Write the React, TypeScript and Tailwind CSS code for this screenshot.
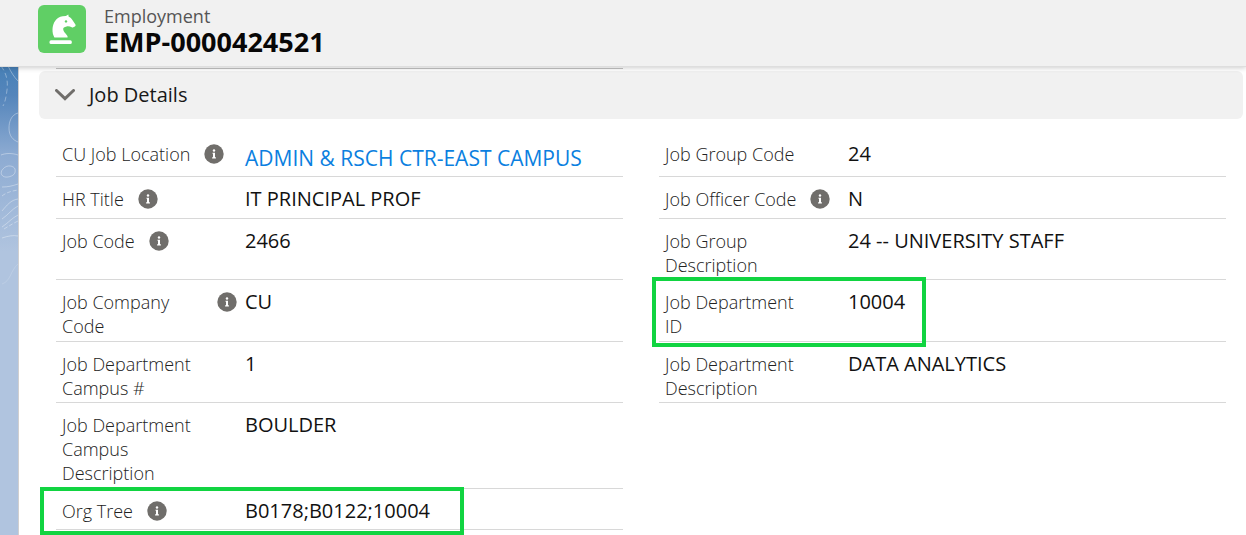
import { useState } from "react";
import type { ReactNode } from "react";

type FieldData = {
  label: string;
  value: string;
  info?: boolean;
  link?: boolean;
  highlight?: string;
};

type RowData = { left: FieldData; right?: FieldData; size: string };

const rows: RowData[] = [
  {
    left: { label: "CU Job Location", value: "ADMIN & RSCH CTR-EAST CAMPUS", info: true, link: true },
    right: { label: "Job Group Code", value: "24" },
    size: "min-h-[45px] pb-0.5",
  },
  {
    left: { label: "HR Title", value: "IT PRINCIPAL PROF", info: true },
    right: { label: "Job Officer Code", value: "N", info: true },
    size: "min-h-[42px] pb-0.5",
  },
  {
    left: { label: "Job Code", value: "2466", info: true },
    right: { label: "Job Group Description", value: "24 -- UNIVERSITY STAFF" },
    size: "pb-0.5",
  },
  {
    left: { label: "Job Company Code", value: "CU", info: true },
    right: {
      label: "Job Department ID",
      value: "10004",
      highlight: "-left-[7px] -top-[3px] -bottom-1.5 w-[274px]",
    },
    size: "pb-[3px]",
  },
  {
    left: { label: "Job Department Campus #", value: "1" },
    right: { label: "Job Department Description", value: "DATA ANALYTICS" },
    size: "pb-0.5",
  },
  {
    left: { label: "Job Department Campus Description", value: "BOULDER" },
    size: "pb-[3px]",
  },
  {
    left: {
      label: "Org Tree",
      value: "B0178;B0122;10004",
      info: true,
      highlight: "-left-4 -top-0.5 -bottom-1.5 w-[424px]",
    },
    size: "min-h-[41px] pb-0.5",
  },
];

function KnightIcon() {
  return (
    <svg viewBox="0 0 48 48" className="size-12 shrink-0 rounded-md bg-[#60cf65]" aria-hidden="true">
      <path
        fill="#fff"
        d="M30.300 9.600L30.700 11.800C32.300 12.400 33.600 13.600 34.400 15L37.400 19.600C37.900 20.400 37.600 21 36.900 21.400L35.300 22.300C34.700 22.600 34.200 22.500 33.700 22.200C32.200 21.400 30.400 21.100 28.600 21.400C26.200 21.800 25.100 22.800 25.200 24.300C25.300 26.500 27.200 28.100 28.700 29.900C29.600 30.900 29.900 31.700 29.500 32.600H16.400C15 30 14.400 27.600 14.500 24.300C14.800 17.600 18.300 12.300 24.600 11.200L27.900 11Z"
      />
      <circle cx="28" cy="16.400" r="1.200" fill="#60cf65" />
      <rect x="11.500" y="35.200" width="22.300" height="3.700" rx="1.500" fill="#fff" />
    </svg>
  );
}

function InfoButton({ label }: { label: string }) {
  return (
    <button type="button" aria-label={`Help ${label}`} className="mt-0.5 size-5 shrink-0">
      <svg viewBox="0 0 20 20" className="size-5" aria-hidden="true">
        <circle cx="10" cy="10" r="9.700" fill="#706e6b" />
        <circle cx="10" cy="6.500" r="1.200" fill="#fff" />
        <path fill="#fff" d="M8.500 8.700h2.500v4.600h.9v1.100H8.100v-1.100H9V9.800h-.5z" />
      </svg>
    </button>
  );
}

function Field({ data, size }: { data: FieldData; size: string }) {
  let value: ReactNode = data.value;
  if (data.link) {
    value = (
      <a href="#location" className="text-[#0b7fe0]">
        {data.value}
      </a>
    );
  }
  return (
    <div className={`relative flex items-start border-b border-[#d8d8d8] pt-2.5 ${size}`}>
      <dt className="flex w-1/3 shrink-0 items-start gap-3.5 pl-1.5 text-lg leading-6 font-light text-[#222]">
        <span className="max-w-[141px]">{data.label}</span>
        {data.info && <InfoButton label={data.label} />}
      </dt>
      <dd className={`min-w-0 text-[#111] ${data.link ? "pt-1 text-[21px] leading-6" : "text-xl leading-6"}`}>
        {value}
      </dd>
      {data.highlight && (
        <div className={`pointer-events-none absolute border-4 border-[#11d441] ${data.highlight}`} />
      )}
    </div>
  );
}

function Backdrop() {
  return (
    <div className="w-[19px] shrink-0 overflow-hidden border-r border-[#d0cfd0] bg-[#b0c4df]">
      <svg viewBox="0 0 18 240" className="-mt-2 h-60 w-[18px]" aria-hidden="true">
        <defs>
          <linearGradient id="sky" x1="0" y1="0" x2="0" y2="1">
            <stop offset="0" stopColor="#447fb5" />
            <stop offset="0.150" stopColor="#5485bb" />
            <stop offset="0.400" stopColor="#8dabd2" />
            <stop offset="0.800" stopColor="#b0c4df" />
          </linearGradient>
        </defs>
        <rect width="18" height="240" fill="url(#sky)" />
        <g fill="none" stroke="#fff" strokeOpacity="0.350" strokeWidth="1">
          <path strokeDasharray="5 3" d="M1 7c6 8 7 16 6 24-1 8-2 12-4 16" />
          <path d="M8 7c3 6 6 11 10 15M18 54c-7 2-9 9-9 15 0 8 4 12 9 14" />
          <path d="M1 96c5-2 11-2 17 0M3 110c4-5 11-3 12 0 1 5-2 7-7 8-6 1-9-4-5-8M2 128c6 0 10-1 16-3" />
          <path strokeDasharray="4 2" d="M2 137c5-4 10-5 16-6" />
          <path d="M2 152c5-6 9-11 16-12M2 160c6-4 10-10 16-13M2 168c6-4 10-9 16-12" />
          <path strokeDasharray="4 2" d="M4 170c5-3 8-5 14-8" />
          <path d="M2 179c6-2 11-3 16-2" />
          <path strokeOpacity="0.150" d="M2 225c9-3 8-13 16-20" />
        </g>
      </svg>
    </div>
  );
}

export default function App() {
  const [open, setOpen] = useState(true);
  return (
    <div className="flex min-h-screen flex-col overflow-hidden bg-white font-['Open_Sans','Noto_Sans',sans-serif]">
      <header className="relative z-10 flex items-start gap-[18px] border-b border-[#dedede] bg-[#f1f1f1] pt-[5px] pr-6 pb-[9px] pl-[38px] shadow-[0_1px_5px_rgba(0,0,0,0.2)]">
        <KnightIcon />
        <div>
          <p className="text-lg leading-[22px] text-[#555]">Employment</p>
          <h1 className="text-[27px] leading-[30px] font-bold text-[#080707]">EMP-0000424521</h1>
        </div>
      </header>
      <div className="flex flex-1">
        <Backdrop />
        <main className="min-w-0 flex-1 pt-px pr-[3px] pl-5">
          <div className="grid grid-cols-2 gap-x-9 px-[17px]">
            <div className="border-b border-[#c4c4c4]" />
          </div>
          <h2 className="mt-0.5 rounded-md bg-[#f1f1f1]">
            <button
              type="button"
              aria-expanded={open}
              onClick={() => setOpen(!open)}
              className="flex h-12 w-full items-center gap-3.5 pl-4 text-left text-xl text-[#181818]"
            >
              <svg viewBox="0 0 20 12" className="h-3 w-5" aria-hidden="true">
                <path d="M1.500 1.500L10 9.700l8.500-8.200" fill="none" stroke="#706e6b" strokeWidth="3" strokeLinecap="round" />
              </svg>
              Job Details
            </button>
          </h2>
          {open && (
            <dl className="flex flex-col px-[17px] pt-[13px]">
              {rows.map((row) => (
                <div key={row.left.label} className="grid grid-cols-2 gap-x-9">
                  <Field data={row.left} size={row.size} />
                  {row.right && <Field data={row.right} size={row.size} />}
                </div>
              ))}
            </dl>
          )}
        </main>
      </div>
    </div>
  );
}
